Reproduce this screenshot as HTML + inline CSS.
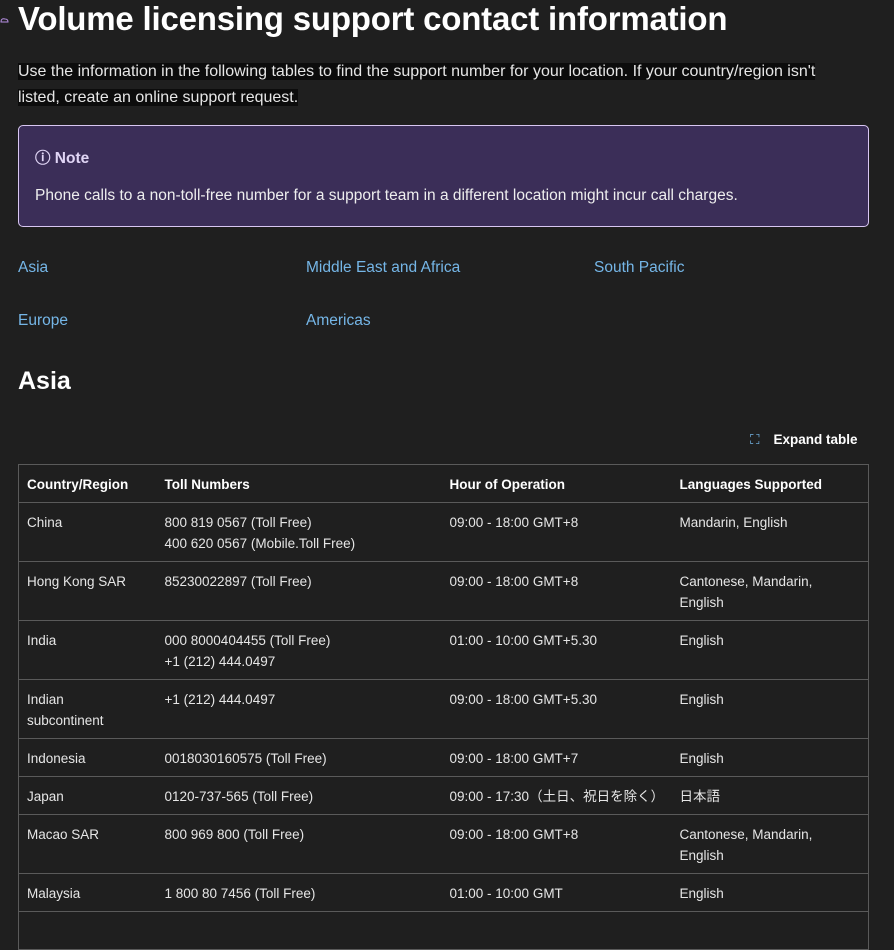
<!DOCTYPE html>
<html><head><style>
body{margin:0;background:#1f1f1f;color:#e6e6e6;font-family:"Segoe UI","Liberation Sans",sans-serif;width:894px;height:924px;overflow:hidden;position:relative}
h1{position:absolute;left:18px;top:0px;margin:0;font-size:33px;font-weight:600;color:#fff;letter-spacing:-0.2px}
.intro{position:absolute;left:18px;top:59px;font-size:16px;line-height:26px;color:#e6e6e6;width:860px}
.intro span{background:#0c0c0c}
.note{position:absolute;left:18px;top:125px;width:851px;height:102px;box-sizing:border-box;background:#3b2e58;border:1px solid #d8c6f2;border-radius:5px}
.note .t{position:absolute;left:16px;top:20px;font-size:15.5px;font-weight:600;color:#e0d5f5}
.note .b{position:absolute;left:16px;top:61px;font-size:15.5px;color:#eee}
a{color:#75b6e7;text-decoration:none;position:absolute;font-size:15.5px}
h2{position:absolute;left:18px;top:367px;margin:0;font-size:25px;font-weight:600;color:#fff}
.exp{position:absolute;left:750px;top:432px;font-size:13.5px;font-weight:600;color:#fff}
table{position:absolute;left:18px;top:464px;width:851px;border-collapse:collapse;font-size:13.5px;color:#e6e6e6}
td,th{border:1px solid #5a5a5a;padding:9px 8px 7px 8px;vertical-align:top;text-align:left;line-height:21px}
th{font-weight:600;color:#fff;padding:9px 8px 7px}
td,th{border-left:none;border-right:none}
tr>*:first-child{border-left:1px solid #5a5a5a}
tr>*:last-child{border-right:1px solid #5a5a5a}
</style></head><body>
<svg style="position:absolute;left:0;top:15px" width="10" height="10"><path d="M1 7 Q1 3 5 4 Q8 4 8 7 Z" fill="none" stroke="#b58ee0" stroke-width="1"/></svg>
<h1>Volume licensing support contact information</h1>
<div class="intro"><span>Use the information in the following tables to find the support number for your location. If your country/region isn't</span><br><span>listed, create an online support request.</span></div>
<div class="note"><div class="t">ⓘ Note</div><div class="b">Phone calls to a non-toll-free number for a support team in a different location might incur call charges.</div></div>
<a style="left:18px;top:259px">Asia</a>
<a style="left:306px;top:259px">Middle East and Africa</a>
<a style="left:594px;top:259px">South Pacific</a>
<a style="left:18px;top:312px">Europe</a>
<a style="left:306px;top:312px">Americas</a>
<h2>Asia</h2>
<div class="exp"><span style="color:#75b6e7;font-weight:400;margin-right:14px">⛶</span>Expand table</div>
<table>
<colgroup><col style="width:138px"><col style="width:285px"><col style="width:230px"><col></colgroup>
<tr><th>Country/Region</th><th>Toll Numbers</th><th>Hour of Operation</th><th>Languages Supported</th></tr>
<tr><td>China</td><td>800 819 0567 (Toll Free)<br>400 620 0567 (Mobile.Toll Free)</td><td>09:00 - 18:00 GMT+8</td><td>Mandarin, English</td></tr>
<tr><td>Hong Kong SAR</td><td>85230022897 (Toll Free)</td><td>09:00 - 18:00 GMT+8</td><td>Cantonese, Mandarin,<br>English</td></tr>
<tr><td>India</td><td>000 8000404455 (Toll Free)<br>+1 (212) 444.0497</td><td>01:00 - 10:00 GMT+5.30</td><td>English</td></tr>
<tr><td>Indian<br>subcontinent</td><td>+1 (212) 444.0497</td><td>09:00 - 18:00 GMT+5.30</td><td>English</td></tr>
<tr><td>Indonesia</td><td>0018030160575 (Toll Free)</td><td>09:00 - 18:00 GMT+7</td><td>English</td></tr>
<tr><td>Japan</td><td>0120-737-565 (Toll Free)</td><td style="font-family:'Liberation Sans','Noto Sans CJK JP',sans-serif">09:00 - 17:30（土日、祝日を除く）</td><td style="font-family:'Liberation Sans','Noto Sans CJK JP',sans-serif">日本語</td></tr>
<tr><td>Macao SAR</td><td>800 969 800 (Toll Free)</td><td>09:00 - 18:00 GMT+8</td><td>Cantonese, Mandarin,<br>English</td></tr>
<tr><td>Malaysia</td><td>1 800 80 7456 (Toll Free)</td><td>01:00 - 10:00 GMT</td><td>English</td></tr>
<tr><td>&nbsp;</td><td></td><td></td><td></td></tr>
</table>
</body></html>
